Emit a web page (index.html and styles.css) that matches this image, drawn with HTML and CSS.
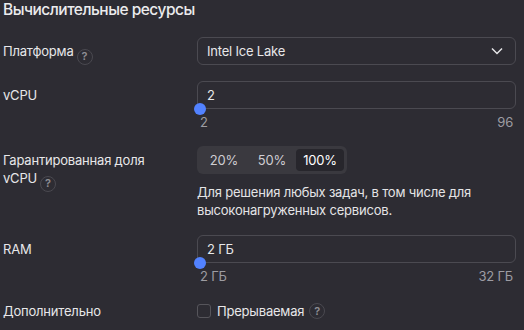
FILE: index.html
```html
<!DOCTYPE html>
<html lang="ru">
<head>
<meta charset="utf-8">
<link rel="stylesheet" href="styles.css">
</head>
<body>
<div class="page">
  <h2 class="title">Вычислительные ресурсы</h2>

  <div class="row row-platform">
    <div class="label">Платформа<span class="help">?</span></div>
    <div class="control">
      <div class="select">
        <span>Intel Ice Lake</span>
        <svg class="chevron" width="12" height="8" viewBox="0 0 12 8"><path d="M1 1.5 L6 6.5 L11 1.5" fill="none" stroke="#e6e6e8" stroke-width="1.5"/></svg>
      </div>
    </div>
  </div>

  <div class="row row-vcpu">
    <div class="label">vCPU</div>
    <div class="control">
      <div class="slider-input">
        <div class="input">2</div>
        <div class="thumb"></div>
      </div>
      <div class="range"><span>2</span><span>96</span></div>
    </div>
  </div>

  <div class="row row-share">
    <div class="label">Гарантированная доля<br>vCPU<span class="help">?</span></div>
    <div class="control">
      <div class="segmented">
        <div class="seg">20%</div>
        <div class="seg">50%</div>
        <div class="seg active">100%</div>
      </div>
      <p class="desc">Для решения любых задач, в том числе для<br>высоконагруженных сервисов.</p>
    </div>
  </div>

  <div class="row row-ram">
    <div class="label">RAM</div>
    <div class="control">
      <div class="slider-input">
        <div class="input">2 ГБ</div>
        <div class="thumb"></div>
      </div>
      <div class="range"><span>2 ГБ</span><span>32 ГБ</span></div>
    </div>
  </div>

  <div class="row row-extra">
    <div class="label label-extra">Дополнительно</div>
    <div class="control">
      <label class="check"><span class="box"></span>Прерываемая<span class="help">?</span></label>
    </div>
  </div>
</div>
</body>
</html>
```

FILE: styles.css
```css
html, body {
  margin: 0;
  padding: 0;
  background: #2d2c33;
}
body {
  font-family: Inter, "Noto Sans", sans-serif;
  font-size: 13px;
  letter-spacing: -0.2px;
  color: #e7e7e9;
  width: 524px;
  height: 330px;
  overflow: hidden;
}
.page {
  padding-left: 3px;
}
.title {
  margin: 0;
  font-size: 15.5px;
  font-weight: 500;
  letter-spacing: -0.5px;
  line-height: 20px;
  color: #ebebed;
}
.row {
  display: grid;
  grid-template-columns: 194px 319px;
}
.row-platform { margin-top: 17px; }
.row-vcpu { margin-top: 16px; }
.row-share { margin-top: 16px; }
.row-ram { margin-top: 16px; }
.row-extra { margin-top: 17px; }

.label {
  padding-top: 5px;
  line-height: 18px;
}
.label-extra { padding-top: 1px; }
.help {
  display: inline-flex;
  align-items: center;
  justify-content: center;
  box-sizing: border-box;
  width: 16px;
  height: 16px;
  margin-left: 3px;
  border: 1px solid #4a4950;
  border-radius: 50%;
  font-size: 11px;
  font-weight: 600;
  letter-spacing: 0;
  line-height: 1;
  color: #8f8e94;
  vertical-align: -4px;
}
.select, .input {
  box-sizing: border-box;
  height: 28px;
  border: 1px solid #4b4a51;
  border-radius: 6px;
  padding: 0 9px;
  display: flex;
  align-items: center;
}
.select {
  justify-content: space-between;
}
.chevron { margin-right: 3px; }
.slider-input {
  position: relative;
}
.thumb {
  position: absolute;
  left: -3px;
  bottom: -6px;
  width: 12px;
  height: 12px;
  border-radius: 50%;
  background: #5282ff;
}
.range {
  display: flex;
  justify-content: space-between;
  margin-top: 5px;
  line-height: 16px;
  color: #9d9ca2;
  padding: 0 3px 0 3px;
}
.segmented {
  display: inline-flex;
  padding: 3px;
  background: #3a393f;
  border-radius: 6px;
}
.seg {
  width: 48px;
  height: 22px;
  line-height: 22px;
  text-align: center;
  color: #cfced3;
  border-radius: 4px;
}
.seg.active {
  background: #27262c;
  color: #ffffff;
}
.desc {
  margin: 9px 0 0;
  line-height: 18px;
  color: #e4e4e6;
}
.check {
  display: flex;
  align-items: center;
  height: 20px;
}
.box {
  box-sizing: border-box;
  width: 14px;
  height: 14px;
  border: 1px solid #56555b;
  border-radius: 3px;
  margin-right: 6px;
}
.check .help { margin-left: 5px; }
```
